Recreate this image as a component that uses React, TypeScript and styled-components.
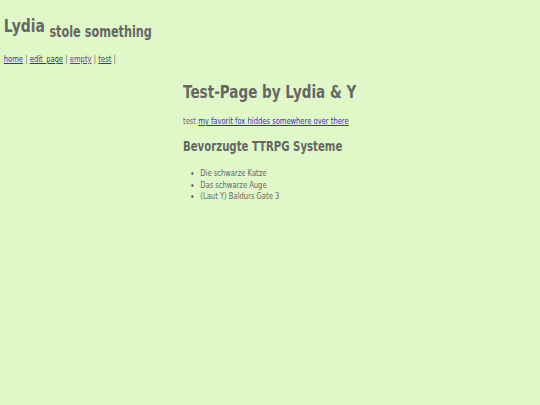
import React from "react";
import styled, { createGlobalStyle } from "styled-components";

const Global = createGlobalStyle`
  html, body { margin: 0; padding: 0; }
  body {
    background: #e0f8c8;
    color: #666666;
    font-family: "DejaVu Sans", sans-serif;
    font-size: 9px;
  }
`;

/* The reference uses a condensed face; narrow the DejaVu Sans glyphs to match. */
const Condensed = styled.div`
  transform: scaleX(0.752);
  transform-origin: 0 0;
`;

const Header = styled(Condensed)`
  padding: 16px 5px 0 5px;
  display: flex;
  align-items: flex-start;
  gap: 6px;
`;

const SiteTitle = styled.h1`
  margin: 0;
  font-size: 18.5px;
  line-height: 20px;
  font-weight: bold;
`;

const Tagline = styled.span`
  margin-top: 8px;
  font-size: 15px;
  line-height: 16px;
  font-weight: bold;
`;

const Nav = styled(Condensed)`
  padding: 0 5px;
  margin-top: 13px;
  font-size: 9px;
  line-height: 12px;
`;

const Link = styled.a<{ $visited?: boolean }>`
  color: ${(p) => (p.$visited ? "#6a3d8a" : "#3030c8")};
  text-decoration: underline;
`;

const Sep = styled.span`
  margin: 0 3px;
`;

const Main = styled(Condensed)`
  margin-left: 183px;
  margin-top: 16px;
`;

const PageTitle = styled.h2`
  margin: 0;
  font-size: 18px;
  line-height: 22px;
  font-weight: bold;
`;

const Para = styled.p`
  margin: 12px 0 0 0;
  font-size: 9px;
  line-height: 12px;
`;

const SubTitle = styled.h3`
  margin: 11px 0 0 0;
  font-size: 13.5px;
  line-height: 16px;
  font-weight: bold;
`;

const List = styled.ul`
  margin: 14px 0 0 0;
  padding-left: 23px;
  font-size: 9px;
  line-height: 11.5px;
`;

export default function App() {
  return (
    <>
      <Global />
      <Header as="header">
        <SiteTitle>Lydia</SiteTitle>
        <Tagline>stole something</Tagline>
      </Header>
      <Nav as="nav">
        <Link href="#">home</Link>
        <Sep>|</Sep>
        <Link href="#">edit_page</Link>
        <Sep>|</Sep>
        <Link href="#" $visited>empty</Link>
        <Sep>|</Sep>
        <Link href="#">test</Link>
        <Sep>|</Sep>
      </Nav>
      <Main as="main">
        <PageTitle>Test-Page by Lydia &amp; Y</PageTitle>
        <Para>
          test <Link href="#">my favorit fox hiddes somewhere over there</Link>
        </Para>
        <SubTitle>Bevorzugte TTRPG Systeme</SubTitle>
        <List>
          <li>Die schwarze Katze</li>
          <li>Das schwarze Auge</li>
          <li>(Laut Y) Baldurs Gate 3</li>
        </List>
      </Main>
    </>
  );
}
